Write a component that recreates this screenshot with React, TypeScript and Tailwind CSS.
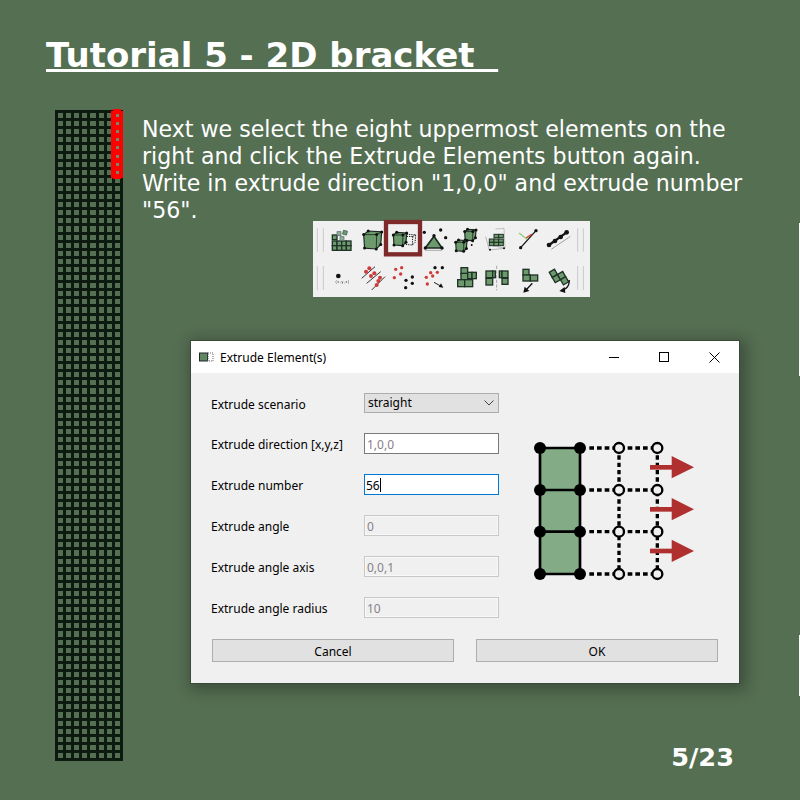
const VERTICALS = [0, 8, 16, 24, 32, 41, 49, 57, 65];
const ROWS = 80;

function MeshColumn() {
  const lines = Array.from({ length: ROWS + 1 }, (_, i) => Math.round(i * 8.1));
  return (
    <svg width="68" height="651" viewBox="0 0 68 651" shapeRendering="crispEdges" className="shrink-0 overflow-visible">
      {VERTICALS.map((x) => (
        <rect key={x} x={x} y="0" width="3" height="651" fill="#0d1a10" />
      ))}
      {lines.map((y) => (
        <rect key={y} x="0" y={y} width="68" height="3" fill="#0d1a10" />
      ))}
      <rect x="56" y="1" width="12" height="67" fill="#ff0000" />
      <rect x="58" y="-1" width="8" height="70" fill="#ff0000" />
      {Array.from({ length: 8 }, (_, i) => (
        <rect key={i} x="61" y={Math.round(4 + i * 8.1)} width="3" height="3" fill="#6d8c69" />
      ))}
    </svg>
  );
}

function Cell({ x, y, s = 22, h }: { x: number; y: number; s?: number; h?: number }) {
  return <rect x={x} y={y} width={s} height={h ?? s} fill="#6d9a6c" stroke="#1f3226" strokeWidth="4" />;
}

function Dots({ pts, fill = "#111", r = 5 }: { pts: number[][]; fill?: string; r?: number }) {
  return (
    <>
      {pts.map(([x, y]) => (
        <circle key={`${x}-${y}`} cx={x} cy={y} r={r} fill={fill} />
      ))}
    </>
  );
}

function Cube({ x, y, s, dashed }: { x: number; y: number; s: number; dashed?: boolean }) {
  const p = (a: number, b: number) => [x + a * s, y + b * s];
  const outer = [p(0, 0.2), p(0.25, 0), p(1, 0.05), p(0.95, 0.75), p(0.7, 1), p(0.05, 0.95)];
  const front = p(0.72, 0.2);
  const lines = [p(0, 0.2), p(1, 0.05), p(0.7, 1)];
  if (dashed) {
    return (
      <g fill="none" stroke="#222" strokeWidth="3" strokeDasharray="4 3">
        <polygon points={outer.map((q) => q.join(",")).join(" ")} />
        {lines.map((q) => (
          <line key={q.join()} x1={front[0]} y1={front[1]} x2={q[0]} y2={q[1]} />
        ))}
      </g>
    );
  }
  return (
    <g>
      <polygon points={outer.map((q) => q.join(",")).join(" ")} fill="#6d9a6c" stroke="#1a2a20" strokeWidth="3.5" />
      {lines.map((q) => (
        <line key={q.join()} x1={front[0]} y1={front[1]} x2={q[0]} y2={q[1]} stroke="#1a2a20" strokeWidth="2.5" />
      ))}
      <Dots pts={[...outer, front]} r={4.5} />
    </g>
  );
}

function ToolbarIcons() {
  return (
    <svg width="277" height="76" viewBox="9 18 831 228" className="overflow-visible blur-[0.35px]">
      {[22, 40, 803, 820].map((x) => (
        <g key={x} stroke="#c9c9c9" strokeWidth="3">
          <line x1={x} y1="40" x2={x} y2="110" />
          <line x1={x} y1="153" x2={x} y2="225" />
        </g>
      ))}

      {/* top row */}
      <g>
        <Cell x={67} y={60} s={14} />
        <Cell x={67} y={78} s={14} />
        <Cell x={81} y={78} s={14} />
        <Cell x={95} y={78} s={14} />
        <Cell x={109} y={78} s={14} />
        <Cell x={67} y={92} s={14} />
        <Cell x={81} y={92} s={14} />
        <Cell x={95} y={92} s={14} />
        <Cell x={109} y={92} s={14} />
        <rect x="81" y="50" width="12" height="12" fill="#8cb08b" stroke="#567" strokeWidth="2" />
        <rect x="99" y="47" width="12" height="12" fill="#6d9a6c" stroke="#354" strokeWidth="2" transform="rotate(15 105 53)" />
        <rect x="90" y="65" width="12" height="12" fill="#8cb08b" stroke="#567" strokeWidth="2" />
      </g>
      <Cube x={161} y={48} s={54} />
      <g>
        <Cube x={285} y={58} s={32} dashed />
        <Cube x={250} y={52} s={40} />
      </g>
      <g>
        <polygon points="372,64 346,99 396,99" fill="#6d9a6c" stroke="#1a2a20" strokeWidth="5" />
        <line x1="345" y1="106" x2="396" y2="106" stroke="#888" strokeWidth="2" />
        <Dots pts={[[343, 52], [392, 45], [407, 68], [372, 62], [346, 99], [396, 99]]} />
      </g>
      <g>
        <line x1="470" y1="78" x2="462" y2="84" stroke="#666" strokeWidth="2" strokeDasharray="3 3" />
        <Cube x={464} y={43} s={34} />
        <Cube x={437} y={75} s={34} />
        <Dots pts={[[485, 90]]} r={3} />
      </g>
      <g>
        <polyline points="556,42 582,40 585,100 548,92" fill="none" stroke="#aaa" strokeWidth="2" />
        <polyline points="527,65 538,105 585,100" fill="none" stroke="#999" strokeWidth="2" />
        {[[538, 72], [552, 72], [566, 72], [552, 58], [566, 58], [538, 82], [552, 82], [566, 82]].map(([x, y]) => (
          <rect key={`${x}-${y}`} x={x} y={y} width="14" height="10" fill="#6d9a6c" stroke="#1f3226" strokeWidth="3" />
        ))}
        <Dots pts={[[540, 104], [582, 100]]} r={3} />
      </g>
      <g strokeLinecap="round">
        <line x1="632" y1="98" x2="678" y2="47" stroke="#151515" strokeWidth="4" />
        <line x1="628" y1="55" x2="650" y2="72" stroke="#8fd06a" strokeWidth="4" />
        <line x1="650" y1="68" x2="665" y2="58" stroke="#c8443a" strokeWidth="4" />
        <Dots pts={[[632, 98], [678, 47]]} />
      </g>
      <g strokeLinecap="round">
        <line x1="717" y1="90" x2="770" y2="52" stroke="#151515" strokeWidth="7" />
        <line x1="725" y1="102" x2="780" y2="65" stroke="#666" strokeWidth="2" strokeDasharray="4 3" />
        <Dots pts={[[717, 90], [735, 78], [752, 66], [770, 52]]} r={7} />
      </g>

      {/* bottom row */}
      <g>
        <circle cx="85" cy="183" r="7" fill="#111" />
        <text x="98" y="204" textAnchor="middle" fontSize="11" letterSpacing="2" fill="#333" fontFamily="'Liberation Sans', sans-serif">(x,y,z)</text>
      </g>
      <g>
        <g stroke="#333" strokeWidth="3">
          <line x1="155" y1="190" x2="195" y2="155" />
          <line x1="170" y1="205" x2="212" y2="170" />
          <line x1="185" y1="225" x2="225" y2="185" />
        </g>
        <Dots fill="#cf3a3a" r={6} pts={[[168, 170], [178, 160], [183, 183], [193, 175], [210, 188], [205, 198], [200, 210]]} />
      </g>
      <g>
        <Dots fill="#cf3a3a" pts={[[257, 163], [275, 158], [272, 177], [253, 188]]} />
        <Dots pts={[[288, 196], [307, 186], [307, 205], [287, 218]]} />
      </g>
      <g>
        <Dots pts={[[375, 158], [397, 158]]} />
        <Dots fill="#cf3a3a" pts={[[362, 173], [382, 172], [349, 187], [368, 183], [352, 207]]} />
        <line x1="372" y1="202" x2="392" y2="213" stroke="#222" strokeWidth="3" />
        <polygon points="400,218 386,216 393,205" fill="#111" />
      </g>
      <g>
        <Cell x={453} y={158} s={20} />
        <Cell x={453} y={175} s={20} />
        <Cell x={473} y={172} s={13} h={19} />
        <Cell x={486} y={172} s={13} h={19} />
        <Cell x={443} y={194} s={21} />
        <Cell x={464} y={194} s={24} h={21} />
      </g>
      <g>
        <Cell x={528} y={168} s={20} />
        <Cell x={528} y={190} s={20} />
        <Cell x={548} y={168} s={8} h={20} />
        <Cell x={568} y={168} s={8} h={20} />
        <Cell x={576} y={168} s={18} h={20} />
        <Cell x={576} y={190} s={18} />
        <line x1="560" y1="152" x2="560" y2="226" stroke="#888" strokeWidth="2" strokeDasharray="10 4" />
      </g>
      <g>
        <Cell x={639} y={163} s={18} />
        <Cell x={639} y={180} s={22} h={18} />
        <Cell x={661} y={180} s={22} h={18} />
        <line x1="667" y1="205" x2="648" y2="225" stroke="#111" strokeWidth="4" />
        <polygon points="640,233 644,215 658,228" fill="#111" />
      </g>
      <g>
        <g transform="rotate(-30 745 185)">
          <Cell x={728} y={160} s={18} />
          <Cell x={728} y={178} s={18} />
          <Cell x={746} y={178} s={18} />
          <Cell x={746} y={196} s={18} />
        </g>
        <path d="M778 195 Q778 220 757 226" fill="none" stroke="#111" strokeWidth="4" />
        <polygon points="748,228 764,216 766,234" fill="#111" />
      </g>

      <rect x="228" y="21" width="102" height="97" fill="none" stroke="#7f2a2a" strokeWidth="13" />
    </svg>
  );
}

function ExtrudeDiagram() {
  const cols = [297, 412];
  const rows = [54, 180, 305, 432];
  return (
    <svg width="190" height="160" viewBox="0 0 570 480" className="mt-[37px] ml-[21px] shrink-0 blur-[0.3px]">
      <rect x="62" y="55" width="118" height="375" rx="12" fill="#82ab86" />
      {rows.map((y) => (
        <line key={y} x1="60" y1={y} x2="180" y2={y} stroke="#000" strokeWidth="8" />
      ))}
      <line x1="60" y1="54" x2="60" y2="432" stroke="#000" strokeWidth="8" />
      <line x1="180" y1="54" x2="180" y2="432" stroke="#000" strokeWidth="8" />
      {rows.map((y) => (
        <line key={y} x1="208" y1={y} x2="412" y2={y} stroke="#000" strokeWidth="10" strokeDasharray="14 9" />
      ))}
      {cols.map((x) => (
        <line key={x} x1={x} y1="54" x2={x} y2="432" stroke="#000" strokeWidth="10" strokeDasharray="13 9" />
      ))}
      {rows.flatMap((y) =>
        [60, 180].map((x) => <circle key={`${x}-${y}`} cx={x} cy={y} r="18" fill="#000" />),
      )}
      {rows.flatMap((y) =>
        cols.map((x) => (
          <circle key={`${x}-${y}`} cx={x} cy={y} r="15" fill="#f0f0f0" stroke="#000" strokeWidth="7" />
        )),
      )}
      {[112, 238, 363].map((y) => (
        <g key={y} fill="#b03030">
          <rect x="390" y={y - 7} width="72" height="14" />
          <polygon points={`455,${y - 34} 522,${y} 455,${y + 33}`} />
        </g>
      ))}
    </svg>
  );
}

function WindowButton({ children }: { children: React.ReactNode }) {
  return <div className="flex h-full w-[50px] items-center justify-center">{children}</div>;
}

function FormRow({ label, children, first }: { label: string; children: React.ReactNode; first?: boolean }) {
  return (
    <div className={`flex items-center ${first ? "h-5" : "h-[21px]"}`}>
      <span className="w-[153px] shrink-0 pt-[3px]">{label}</span>
      {children}
    </div>
  );
}

function Field({ value, disabled }: { value: string; disabled?: boolean }) {
  return (
    <div
      className={`flex h-[21px] w-[135px] items-center border px-[2px] pt-[2px] text-[#87808a] ${
        disabled
          ? "border-[#c8c8c8] bg-[#f0f0f0] shadow-[inset_0_0_0_1px_#f8f8f8]"
          : "border-[#7a7a7a] bg-white"
      }`}
    >
      {value}
    </div>
  );
}

export default function App() {
  return (
    <div className="relative flex h-[800px] w-[800px] flex-col overflow-hidden bg-[#556f53] font-['DejaVu_Sans',sans-serif]">
      <h1 className="ml-[46px] mt-[35px] h-[75px] whitespace-pre text-[34px] font-bold leading-[40px] text-white underline">
        {"Tutorial 5 - 2D bracket  "}
      </h1>

      <div className="ml-[55px] flex">
        <MeshColumn />
        <div className="ml-[19px] flex flex-col">
          <p className="mt-[6px] h-[105px] w-[620px] text-[22.1px] leading-[27px] text-white">
            Next we select the eight uppermost elements on the
            <br />
            right and click the Extrude Elements button again.
            <br />
            Write in extrude direction "1,0,0" and extrude number
            <br />
            "56".
          </p>

          <div className="ml-[171px] h-[76px] w-[277px] bg-[#f0f0f0]">
            <ToolbarIcons />
          </div>

          <div className="ml-[49px] mt-[44px] flex h-[342px] w-[548px] flex-col bg-[#f0f0f0] font-['Noto_Sans',sans-serif] text-[12px] text-black shadow-[0_0_0_1px_#3a4a3a,3px_3px_14px_4px_rgba(0,0,0,0.3)]">
            <div className="flex h-8 items-center bg-white pl-2">
              <svg width="15" height="12" viewBox="0 0 15 12" className="mr-[6px]">
                <rect x="0.5" y="2" width="8" height="8" fill="#5f8a5f" stroke="#223" strokeWidth="1" />
                <rect x="9" y="2" width="5" height="8" fill="none" stroke="#666" strokeWidth="1" strokeDasharray="1 1" />
              </svg>
              <span className="pt-[2px]">Extrude Element(s)</span>
              <div className="ml-auto flex h-full">
                <WindowButton>
                  <div className="h-px w-[10px] bg-black" />
                </WindowButton>
                <WindowButton>
                  <div className="h-[10px] w-[10px] border border-black" />
                </WindowButton>
                <WindowButton>
                  <svg width="11" height="11" viewBox="0 0 11 11" stroke="#000" strokeWidth="1">
                    <line x1="0.5" y1="0.5" x2="10.5" y2="10.5" />
                    <line x1="10.5" y1="0.5" x2="0.5" y2="10.5" />
                  </svg>
                </WindowButton>
              </div>
            </div>

            <div className="flex px-5 pt-5">
              <div className="flex w-[288px] shrink-0 flex-col gap-5">
                <FormRow label="Extrude scenario" first>
                  <div className="flex h-5 w-[135px] items-center justify-between border border-[#adadad] bg-[#e1e1e1] pl-[3px] pr-[4px]">
                    <span>straight</span>
                    <svg width="10" height="6" viewBox="0 0 10 6" fill="none" stroke="#444" strokeWidth="1">
                      <polyline points="0.5,0.5 5,5 9.5,0.5" />
                    </svg>
                  </div>
                </FormRow>
                <FormRow label="Extrude direction [x,y,z]">
                  <Field value="1,0,0" />
                </FormRow>
                <FormRow label="Extrude number">
                  <div className="flex h-[21px] w-[135px] items-center border border-[#0078d7] bg-white px-[1px]">
                    <span className="pt-[2px]">56</span>
                    <span className="h-[14px] w-px bg-black" />
                  </div>
                </FormRow>
                <FormRow label="Extrude angle">
                  <Field value="0" disabled />
                </FormRow>
                <FormRow label="Extrude angle axis">
                  <Field value="0,0,1" disabled />
                </FormRow>
                <FormRow label="Extrude angle radius">
                  <Field value="10" disabled />
                </FormRow>
              </div>
              <ExtrudeDiagram />
            </div>

            <div className="ml-[21px] mt-[21px] flex gap-[22px]">
              <div className="flex h-[23px] w-[242px] items-center justify-center border border-[#adadad] bg-[#e1e1e1] pt-[2px]">
                Cancel
              </div>
              <div className="flex h-[23px] w-[242px] items-center justify-center border border-[#adadad] bg-[#e1e1e1] pt-[2px]">
                OK
              </div>
            </div>
          </div>
        </div>
      </div>

      <div className="absolute right-[66px] top-[741px] text-[25.6px] font-bold leading-[32px] text-white">5/23</div>

      {/* stray white edge left over in the slide */}
      <div className="absolute right-0 top-[223px] h-[153px] w-px bg-white" />
      <div className="absolute right-0 top-[635px] h-[61px] w-px bg-white" />
    </div>
  );
}
